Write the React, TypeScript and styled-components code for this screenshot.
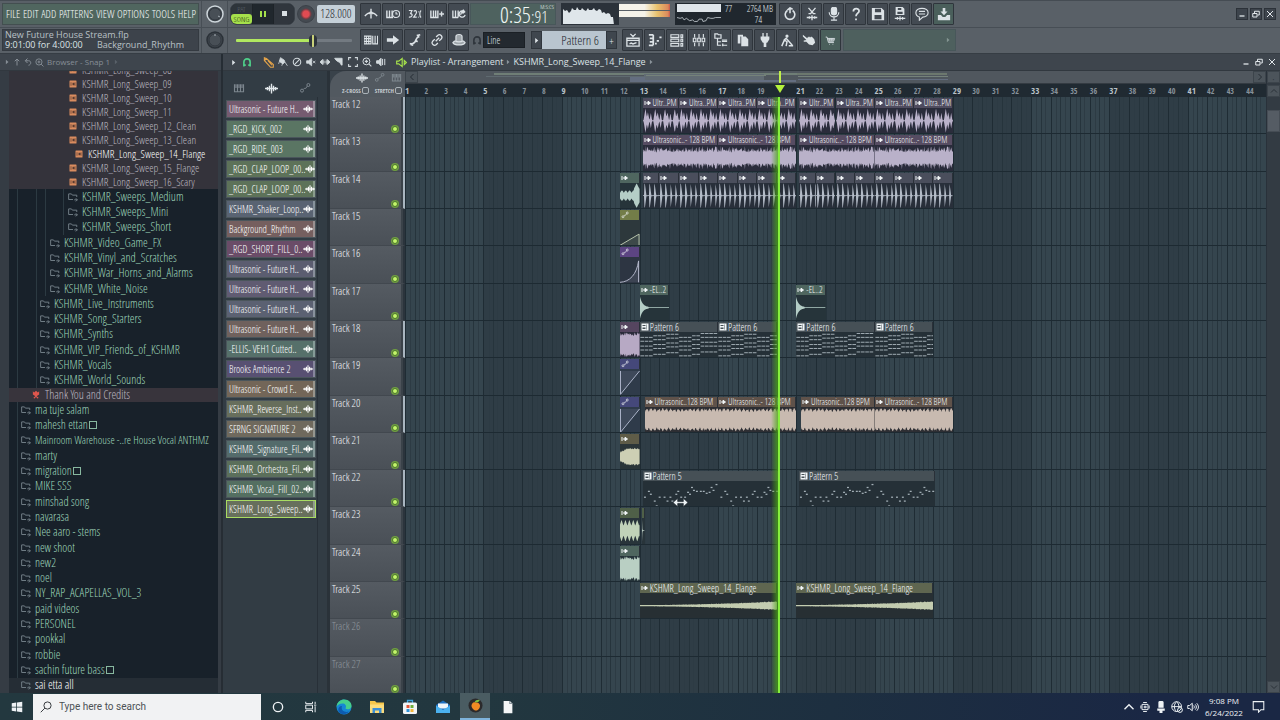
import React from "react";
import styled, { createGlobalStyle, css } from "styled-components";

const narrow = `"Open Sans Condensed Light", "Open Sans Condensed", "Liberation Sans Narrow", sans-serif`;
const strong = `"Open Sans Condensed", "Liberation Sans Narrow", sans-serif`;
const sans = `"Open Sans", "Noto Sans", sans-serif`;

const GlobalStyle = createGlobalStyle`
  *, *::before, *::after { box-sizing: border-box; }
  body { margin: 0; background: #2f3b43; font-family: ${narrow}; font-weight: 300; font-size: 11px; color: #d5dbdf; }
  button, input, select { font: inherit; color: inherit; margin: 0; padding: 0; border: 0; background: none; border-radius: 0; }
  ul { margin: 0; padding: 0; list-style: none; }
  svg { display: block; flex: none; }
`;

/* ---------- icons, all on a 16 x 16 box ---------- */

const WaveGlyph = <path d="M0 8h16M3 6v4M5.500 4.500v7M8 2v12M10.500 4.500v7M13 6v4" strokeWidth="1.700" />;
const PianoGlyph = <path d="M2 3v10h12V3M6 3v10M10 3v10M4 3v5M8 3v5M12 3v5" strokeWidth="1.500" />;
const AutoGlyph = (
  <>
    <circle cx="4" cy="11.500" r="2" />
    <circle cx="12.500" cy="4" r="2" />
    <path d="M5.500 10l1.500-1.500h2L11 5.500" />
  </>
);

const icons: Record<string, React.ReactNode> = {
  wave: WaveGlyph,
  piano: PianoGlyph,
  auto: AutoGlyph,
  metronome: <path d="M1 10.500c2-3 4.500-4 7-4s5 1 7 4M8 2v11M5.500 8L8 5l2.500 3" strokeWidth="1.600" />,
  wait: (
    <>
      <path d="M1 4v8h7M4 4v8M7 4v8" strokeWidth="1.600" />
      <circle cx="11.500" cy="8" r="4" />
      <path d="M11.500 5.500V8h2" />
    </>
  ),
  countdown: <path d="M1 4h3.500L3 7.500c3 .5 2 4.500-2 4M6.500 5c3-2.500 4 1 2.500 3l-2.500 3.500h3.500M12 5v1M12 11v1M15 4c-2 1-2 7 0 8" strokeWidth="1.400" />,
  pianoPlus: <path d="M1 4v8h8V4M4 4v8M6.500 4v8M10.500 8H16M13.200 5.200v5.600" strokeWidth="1.600" />,
  loopRec: <path d="M1 4v8h6M4 4v8M7 4v8M14 5.500a3.500 3.500 0 1 0 1 3.500M10 9a3.500 3.500 0 0 1 4-3.500M12.500 3l2 2.500-2.500 2" strokeWidth="1.500" />,
  typing: <path d="M0 3.500h8v9H0zM0 6.500h8M0 9.500h8M2.700 3.500v9M5.400 3.500v9M10 3v9.500h5.500V3M12.700 3v9" strokeWidth="1.300" />,
  arrow: <path d="M1 6h7V2.500L15 8l-7 5.500V10H1z" fill="currentColor" stroke="none" />,
  slide: <path d="M2 12c4 1 6-1 7-4s2-3 4-4M3 13l3 1M10 3l4-1M8 8l3 2" strokeWidth="1.900" />,
  link: <path d="M6.500 9.500l4-4M7 4.500l2-2c2.500-2 6 1.500 4 4l-2.500 2.500M9 11.500l-2 2c-2.500 2-6-1.500-4-4L5.500 7" strokeWidth="1.500" />,
  stamp: <path d="M4.500 10V4c0-3 7-3 7 0v6M1 11c2 3.500 12 3.500 14 0-1.500-1.800-3-2-3-2-1 1.500-7 1.500-8 0 0 0-1.500.2-3 2z" fill="currentColor" fillOpacity=".6" />,
  playlist: <path d="M5 1l3 3 3-3M1 6h14v9H1zM1 8.500h14M4 12.500l2-1 2 1 4-1.500" strokeWidth="1.500" />,
  pianoRoll: <path d="M1 2h5M1 14h5M6 2v12M2 6h4M2 10h4M8 12h2M10 9h2.500M13 5h2.500" strokeWidth="2" />,
  rack: <path d="M1 2h9v3H1zM1 7h9v3H1zM1 12h9v3H1zM12.500 2h2v3h-2zM12.500 7h2v3h-2zM12.500 12h2v3h-2z" />,
  mixer: <path d="M3 1v4M3 11v4M8 1v5M8 11v4M13 1v4M13 11v4M1.500 6h3v4h-3zM6.500 6h3v4h-3zM11.500 6h3v4h-3z" />,
  tree: <path d="M1 1h3l1 1h3v4H1zM4 6v8h4M4 10h4M9 8h6M9 9.500h6M9 14h6M10 12v3" strokeWidth="1.400" />,
  copy: <path d="M2 2h6v2H5v8H2zM6 4h5l3 3v8H6z" fill="currentColor" stroke="none" />,
  plug: <path d="M5 0h1.500v4h3V0H11v4h2v3l-2.500 4H9.500v5h-3v-5H5.500L3 7V4h2z" fill="currentColor" stroke="none" />,
  remove: <path d="M8 2.500a1 1 0 1 0 1 1zM8 5L5 8l3 2-1 5M5 8l-3 7M7 6l7 8M10 14.500h5" strokeWidth="1.700" />,
  hand: <path d="M1 2l5 4 1-2 1 1 1-1 1 1 1-1 3 3 1 4-3 3-4-1-3-3-3 0 0-1.500 3-.5L1 4z" fill="currentColor" stroke="none" />,
  cart: <path d="M1 3h2l2 8h8M3.500 5H14l-1.500 4H5M4 7h9M6 13.500h1M11 13.500h1M7 5v4M10 5v4" strokeWidth="1.300" />,
  restore: <path d="M5 4a5.500 5.500 0 1 0 6 0M8 7V1M5 3.500L8 1l3 1.500" strokeWidth="1.800" />,
  cut: <path d="M4 1l6 7M12 1L6 8M4 7.500h2M10 7.500h2M2 12h12M5 10.500v3M8 9.500v5.500M11 10.500v3" strokeWidth="1.500" />,
  mic: (
    <>
      <rect x="5" y="0" width="6" height="9" rx="3" fill="currentColor" />
      <path d="M2.500 6c0 7 11 7 11 0M8 11v4M4.500 15h7" />
    </>
  ),
  help: <path d="M5 5c0-4 6.500-4 6.500-.500C11.500 7 8 7 8 10.500M8 13v2" strokeWidth="2" />,
  save: <path fillRule="evenodd" d="M1 1h11l3 3v11H1zM4.500 2v4h7V2zM4 9v5h8V9z" fill="currentColor" stroke="none" />,
  saveNew: (
    <>
      <path fillRule="evenodd" d="M3 0h8l2 2v7H3zM5.500 1v2.500h4V1zM5 5.500V8h6V5.500z" fill="currentColor" stroke="none" />
      <path d="M2 13h12M5 11.500v3M8 10.500v5M11 11.500v3" />
    </>
  ),
  chat: <path d="M8 1.500c4 0 7 2 7 5s-3 5-6 5L5 15v-3.500C2.500 10.500 1 9 1 6.500c0-3 3-5 7-5zM4.500 5h7M4.500 8h7" />,
  download: <path d="M6.500 1h3v4H12L8 9.500 4 5h2.500zM1 9h3.500l2 2.500h3l2-2.500H15v6H1z" fill="currentColor" stroke="none" />,
  magnet: <path d="M3 15V8a5 5 0 0 1 10 0v7M2 13h4M10 13h4" strokeWidth="2.600" />,
  pencil: <path d="M2 1l3 1 10 9v4h-4L2 5zM5 2L2.500 5M7 5l6 7" strokeWidth="1.600" />,
  brush: <path d="M4 1l6 4 1 3-3 3-6-4zM8 9l-2 5M11 8l4 6M2 8l-1 3" fill="currentColor" />,
  ban: (
    <>
      <circle cx="8" cy="8" r="6" strokeWidth="1.700" />
      <path d="M3.500 12.500l9-9" strokeWidth="1.700" />
    </>
  ),
  mute: (
    <>
      <path d="M1 6h3l5-4v12L4 10H1z" fill="currentColor" />
      <path d="M11 6l4 4M15 6l-4 4" />
    </>
  ),
  slip: <path d="M4 4L0 8l4 4zM12 4l4 4-4 4zM6 4v8M10 4v8M4 8h8" fill="currentColor" />,
  slicer: <path d="M1 2h12v11c-2 0-3-2-3-4C7 8 3 6 1 2zM9 4v4" fill="currentColor" />,
  select: <path d="M1 5V1h4M11 1h4v4M15 11v4h-4M5 15H1v-4" strokeWidth="1.700" />,
  zoom: (
    <>
      <circle cx="7" cy="7" r="5.500" strokeWidth="1.600" />
      <path d="M11 11l4 4M7 4.500v5M4.500 7h5" strokeWidth="1.700" />
    </>
  ),
  preview: <path d="M1 6h3l4-4v12L4 10H1zM10.500 3v10M14 3v10" fill="currentColor" strokeWidth="1.600" />,
  speaker: <path d="M1 6h3l5-4v12L4 10H1zM12 5l3 3-3 3z" strokeWidth="1.700" />,
  up: <path d="M8 15V2M3.500 6.500L8 2l4.500 4.500" strokeWidth="2" />,
  back: <path d="M7 1L2.500 5.500 7 10M3 5.500h6c6 0 6 8 0 9" strokeWidth="2" />,
  folder: <path d="M1 3h4.500l1.500 2h7v3M1 3v9h7M10 12.500h5M12.500 10l2.500 2.500L12.500 15" strokeWidth="1.500" />,
  sample: (
    <>
      <rect x="1" y="1" width="14" height="14" rx="1" fill="#d98c5f" stroke="none" />
      <path d="M4 4.500v7M6 8h3M12 4.500v7M8.500 5.500L11 8l-2.500 2.500z" stroke="#4b332d" fill="#4b332d" />
    </>
  ),
  flower: <path d="M3 2l2 2 3-3 3 3 2-2v5l-3 2-1 1 3 2-1 2-3-3-3 3-1-2 3-2-1-1-3-2z" fill="#e0564d" stroke="none" />,
  audioClip: <path d="M2 4v8M4 8h5M8 4.500L13 8l-5 3.500z" fill="currentColor" strokeWidth="2" />,
  patternClip: <path fillRule="evenodd" d="M1 1h14v14H1zM3 4v2h6V4zM3 9v3h6V9zM11 3v10h1V3z" fill="currentColor" stroke="none" />,
  minimise: <path d="M3 12h10" strokeWidth="2.600" />,
  window: <path d="M1.500 7h8.500v7H1.500zM5 6V2.500h9.500V10H11" strokeWidth="2" />,
  close: <path d="M2 2l12 12M14 2L2 14" strokeWidth="2" />,
  right: <path d="M5 2l7 6-7 6z" fill="currentColor" stroke="none" />,
  chevLeft: <path d="M11 2L5 8l6 6" strokeWidth="2" />,
  chevRight: <path d="M5 2l6 6-6 6" strokeWidth="2" />,
  chevUp: <path d="M2 11l6-6 6 6" strokeWidth="1.800" />,
  chevDown: <path d="M2 5l6 6 6-6" strokeWidth="1.800" />,
  search: (
    <>
      <circle cx="10" cy="6" r="4.800" />
      <path d="M6.500 9.500L1 15" />
    </>
  ),
  resize: <path d="M0 8l5-4.500V7h6V3.500L16 8l-5 4.500V9H5v3.500z" fill="#eef3f5" stroke="#1c252c" strokeWidth=".7" />,
  windows: <path d="M1 3l6-1v5.500H1zM8 2l7-1v6.500H8zM1 8.500h6V14l-6-1zM8 8.500h7V15l-7-1z" fill="currentColor" stroke="none" />,
  cortana: <circle cx="8" cy="8" r="6.200" strokeWidth="1.800" />,
  taskView: <path d="M1 1v2.500h9V1M1 15v-2.500h9V15M1 5.500h9v5H1zM13.500 1v3M13.500 7v8M12 5.500h3" strokeWidth="1.300" />,
  edge: (
    <>
      <circle cx="8" cy="8" r="7.500" fill="#1688d4" stroke="none" />
      <path d="M.5 8C1 2.500 5 .500 8 .500c5 0 8 3.500 7.500 7-.5 3-5 3.500-6 2 1.500-3-.5-5-3-5C3.500 4.500 1.500 6 .5 8z" fill="#45cf8d" stroke="none" />
      <path d="M6 7c-1.500 4 2 7 7 5.500-3 4-9 3.500-10.500-.500C1.500 9 4 6.500 6 7z" fill="#0d5bb0" stroke="none" />
    </>
  ),
  explorer: (
    <>
      <path d="M1 2h5l1.500 1.500H15V14H1z" fill="#f5c64b" stroke="none" />
      <path d="M1 5.500h14V14H1z" fill="#fbdc7c" stroke="none" />
      <path d="M3.500 14V9h9v5h-2.500v-2.500H6V14z" fill="#3c8fd6" stroke="none" />
    </>
  ),
  store: (
    <>
      <path d="M5.500 4V1.500h5V4" stroke="#3fa6e0" />
      <rect x="1" y="3.500" width="14" height="11.500" rx="1.500" fill="#f1f4f6" stroke="none" />
      <path d="M4.500 6h3v3h-3z" fill="#e3563a" stroke="none" />
      <path d="M8.500 6h3v3h-3z" fill="#6fae3b" stroke="none" />
      <path d="M4.500 10h3v3h-3z" fill="#2f93d8" stroke="none" />
      <path d="M8.500 10h3v3h-3z" fill="#f2b63a" stroke="none" />
    </>
  ),
  mail: (
    <>
      <path d="M1 6l7-4.500L15 6v8H1z" fill="#1d6fc0" stroke="none" />
      <path d="M3 4.500h10v5H3z" fill="#eef5fa" stroke="none" />
      <path d="M1 6.500l7 4.500 7-4.500V14H1z" fill="#4bb1ef" stroke="none" />
    </>
  ),
  fruit: (
    <>
      <circle cx="8" cy="8" r="7.500" fill="#2b2a2c" stroke="none" />
      <path d="M8 4.500c4 0 5.500 3 4.500 5.500S9 14 7 13 3 9.500 4 7s2-2.500 4-2.500z" fill="#f08a24" stroke="none" />
      <path d="M7 4.500C8 2 10.500 1.500 12.500 2c-.5 2-2.500 3-5.500 2.500z" fill="#7ec142" stroke="none" />
    </>
  ),
  page: (
    <>
      <path d="M3 1h7l3 3v11H3z" fill="#f4f6f7" stroke="none" />
      <path d="M10 1v3h3" stroke="#8d98a0" />
    </>
  ),
  meet: <path d="M4 4.500h8v7H4zM5.500 2h5M5.500 14h5M2.500 6v4M13.500 6v4M7 7h2.500v2H7z" strokeWidth="1.300" />,
  micSolid: <path d="M6 0h4c1 0 1.500 1 1.500 2v7H4.500V2C4.500 1 5 0 6 0zM3 10h10v3h-3v3H6v-3H3z" fill="currentColor" stroke="none" />,
  globe: (
    <>
      <circle cx="7.500" cy="7.500" r="6.500" />
      <path d="M1 7.500h13M7.500 1c-4 3-4 10 0 13M7.500 1c4 3 4 10 0 13" />
      <circle cx="12" cy="12" r="3.200" fill="#1f2f49" />
      <path d="M10 14l4-4" />
    </>
  ),
  volume: <path d="M1 6h2.500L7 3v10L3.500 10H1zM9 6c1 1.500 1 2.500 0 4M11 4.500c2 2.500 2 4.500 0 7M13 3c3 3.500 3 6.500 0 10" />,
  notice: <path d="M1.500 2h13v10H11l-3 3v-3H1.500z" />,
};

const Icon = ({ name, size = 12, color }: { name: string; size?: number; color?: string }) => (
  <svg width={size} height={size} viewBox="0 0 16 16" fill="none" stroke="currentColor" strokeWidth="1.300" color={color} aria-hidden="true">
    {icons[name]}
  </svg>
);

/* ---------- top toolbar ---------- */

const App = styled.div`
  min-height: 100vh;
  display: flex;
  flex-direction: column;
  overflow: hidden;
`;

const TopBar = styled.header`
  display: flex;
  flex: none;
  height: 54px;
  background: #596067;
  border-top: 1px solid #454c53;
  border-bottom: 1px solid #363d44;
`;

const Stack = styled.div<{ $width?: number }>`
  display: flex;
  flex-direction: column;
  ${(p) => (p.$width ? `flex: none; width: ${p.$width}px; border-right: 1px solid #474e55;` : "flex: 1; min-width: 0;")}
`;

const BarRow = styled.div<{ $pad?: number; $gap?: number }>`
  display: flex;
  align-items: center;
  flex: 1;
  padding: 0 ${(p) => p.$pad ?? 0}px;
  gap: ${(p) => p.$gap ?? 0}px;
  & + & { border-top: 1px solid #474e55; }
`;

const Menu = styled.nav`
  flex: 1;
  height: 22px;
  display: flex;
  align-items: center;
  justify-content: space-between;
  padding: 0 2px 0 3px;
  background: #50665f;
  border: 1px solid #434f50;
`;

const MenuButton = styled.button`
  font-size: 11px;
  color: #f4f9f8;
`;

const Info = styled.div`
  flex: 1;
  height: 22px;
  display: grid;
  grid-template-columns: 1fr auto;
  line-height: 10px;
  padding: 0 14px 0 2px;
  font-family: ${sans};
  font-weight: 400;
  font-size: 9px;
  background: #3d434b;
  border: 1px solid #343a41;
  color: #b9c0c6;
  white-space: nowrap;
  b { font-weight: 500; color: #dde3e7; }
  span:first-child { grid-column: 1 / 3; }
`;

const KnobButton = styled.button`
  flex: 1;
  display: grid;
  place-items: center;
`;

const Spacer = styled.div<{ $w: number }>`
  flex: none;
  width: ${(p) => p.$w}px;
`;

const Fill = styled.div`
  flex: 1;
`;

const Transport = styled.div`
  display: flex;
  width: 65px;
  height: 22px;
  background: #2a3037;
  border: 1px solid #3b4249;
  border-radius: 7px;
  overflow: hidden;
`;

const ModeSwitch = styled.button`
  width: 21px;
  display: flex;
  flex-direction: column;
  font-size: 8px;
  line-height: 10px;
  color: #59616a;
  text-align: center;
  background: #2e353b;
  span:last-child { background: #a5e04b; color: #1c2612; border-radius: 3px; }
`;

const TransportButton = styled.button<{ $on?: boolean }>`
  flex: 1;
  display: grid;
  place-items: center;
  background: ${(p) => (p.$on ? "#20272d" : "#30363d")};
  border-left: 1px solid #1d2328;
`;

const RecordButton = styled.button`
  width: 18px;
  height: 18px;
  margin: 0 2px;
  border-radius: 50%;
  background: radial-gradient(circle, #e04b52 0 3px, #6b3d44 5px, #444a51 6px);
  border: 1px solid #3b4148;
`;

const Tempo = styled.input`
  width: 38px;
  height: 18px;
  border-radius: 2px;
  background: #c5d0d8;
  color: #1f282f;
  font-size: 12px;
  text-align: center;
`;

const ToolButton = styled.button<{ $green?: boolean }>`
  flex: none;
  width: 21px;
  height: 22px;
  display: grid;
  place-items: center;
  color: #dce2e6;
  background: ${(p) => (p.$green ? "#4a5f5b" : "#434a52")};
  border: 1px solid #2f353c;
  border-radius: 1px;
`;

const ToolGroup = styled.div`
  display: flex;
  gap: 1px;
`;

const Clock = styled.div`
  position: relative;
  width: 86px;
  height: 22px;
  margin-left: 1px;
  padding-right: 7px;
  display: flex;
  justify-content: flex-end;
  align-items: baseline;
  background: #4e625f;
  border: 1px solid #48575a;
  color: #f0f6f4;
  font-size: 22px;
  line-height: 20px;
  small { font-size: 17px; }
`;

const ClockUnit = styled.span`
  position: absolute;
  top: 0;
  right: 1px;
  font-size: 6px;
  line-height: 6px;
`;

const Scope = styled.div`
  width: 58px;
  height: 22px;
  margin-left: 5px;
  padding: 1px;
  background: #2b323a;
`;

const Meter = styled.div`
  width: 51px;
  height: 22px;
  display: flex;
  flex-direction: column;
  gap: 1px;
  padding-top: 1px;
`;

const MeterBar = styled.div`
  height: 6px;
  background: linear-gradient(90deg, #f5f3ea 0 50%, #e8c26d 75%, #dc8a5c 96%, #c9564a);
`;

const Cpu = styled.div`
  width: 101px;
  height: 22px;
  margin: 0 3px 0 5px;
  padding: 0 2px;
  display: grid;
  grid-template-columns: 44px 1fr;
  grid-template-rows: 11px 11px;
  align-items: center;
  background: #20272e;
  color: #e2e8ec;
  font-size: 9px;
  line-height: 11px;
`;

const Load = styled.div`
  height: 8px;
  background: #dfe5ea;
`;

const CpuText = styled.div<{ $end?: number }>`
  display: flex;
  justify-content: space-between;
  padding: 0 ${(p) => p.$end ?? 1}px 0 4px;
`;

const WindowButton = styled.button<{ $framed?: boolean }>`
  width: 12px;
  height: 12px;
  display: grid;
  place-items: center;
  color: #e1e6ea;
  ${(p) => p.$framed && css`background: #3d444c; border: 1px solid #2c3239;`}
`;

const Push = styled.div<{ $gap: number; $end: number }>`
  margin-left: auto;
  padding-right: ${(p) => p.$end}px;
  display: flex;
  gap: ${(p) => p.$gap}px;
`;

const SongPosition = styled.input`
  appearance: none;
  width: 116px;
  height: 12px;
  &::-webkit-slider-runnable-track {
    height: 3px;
    border-radius: 1px;
    background: linear-gradient(90deg, #b1e860 68%, #737a81 68%);
  }
  &::-webkit-slider-thumb {
    appearance: none;
    width: 8px;
    height: 12px;
    margin-top: -4px;
    border-radius: 4px;
    background: linear-gradient(90deg, #2e343b 3px, #c9d17a 3px 5px, #2e343b 5px);
  }
`;

const SnapSelect = styled.select`
  appearance: none;
  width: 42px;
  height: 16px;
  padding: 0 3px;
  background: #23292f;
  border: 1px solid #1b2025;
  color: #dde3e7;
  font-size: 10px;
`;

const PatternName = styled.button`
  width: 64px;
  height: 18px;
  background: #b9c5cf;
  color: #1e262d;
  font-size: 13px;
  text-align: right;
  padding-right: 7px;
`;

const SmallButton = styled.button`
  width: 11px;
  height: 18px;
  display: grid;
  place-items: center;
  background: #3f464e;
  border: 1px solid #30363d;
  color: #dfe5e9;
`;

const HintPanel = styled.div`
  width: 113px;
  height: 22px;
  margin-left: 2px;
  padding-right: 4px;
  display: flex;
  align-items: center;
  justify-content: flex-end;
  background: #4e605e;
  border: 1px solid #48575a;
  color: #849592;
`;

const Knob = ({ light }: { light?: boolean }) => (
  <svg width="20" height="20" viewBox="0 0 20 20" fill="none" aria-hidden="true">
    <circle cx="10" cy="10" r="8" fill="#3e454c" stroke={light ? "#cdd5da" : "#2b3138"} strokeWidth="1.500" />
    <circle cx="10" cy="10" r="6" fill="#484f56" stroke="#333940" />
    <path d={light ? "M13 12l2 1" : "M10 4v2"} stroke="#aab2b8" />
  </svg>
);

const topTools = ["metronome", "wait", "countdown", "pianoPlus", "loopRec"];
const editTools = ["typing", "arrow", "slide", "link", "stamp"];
const fileTools = ["restore", "cut", "mic", "help", "save", "saveNew", "chat", "download"];
const viewTools = ["playlist", "pianoRoll", "rack", "mixer", "tree", "copy", "plug", "remove", "hand", "cart"];

const Tools = ({ names, green }: { names: string[]; green?: string }) => (
  <ToolGroup>
    {names.map((n) => (
      <ToolButton key={n} aria-label={n} $green={n === green}>
        <Icon name={n} size={n === "cart" ? 11 : 14} />
      </ToolButton>
    ))}
  </ToolGroup>
);

const Toolbar = () => (
  <TopBar>
    <Stack $width={202}>
      <BarRow $pad={2}>
        <Menu>
          {["FILE", "EDIT", "ADD", "PATTERNS", "VIEW", "OPTIONS", "TOOLS", "HELP"].map((m) => (
            <MenuButton key={m}>{m}</MenuButton>
          ))}
        </Menu>
      </BarRow>
      <BarRow $pad={2}>
        <Info>
          <span>New Future House Stream.flp</span>
          <b>9:01:00 for 4:00:00</b>
          <span>Background_Rhythm</span>
        </Info>
      </BarRow>
    </Stack>
    <Stack $width={26}>
      <BarRow><KnobButton aria-label="Main volume"><Knob light /></KnobButton></BarRow>
      <BarRow><KnobButton aria-label="Main pitch"><Knob /></KnobButton></BarRow>
    </Stack>
    <Stack>
      <BarRow>
        <Spacer $w={2} />
        <Transport>
          <ModeSwitch><span>PAT</span><span>SONG</span></ModeSwitch>
          <TransportButton $on aria-label="Pause">
            <svg width="6" height="6" viewBox="0 0 6 6"><path d="M0 0h2v6H0zM4 0h2v6H4z" fill="#a5e04b" /></svg>
          </TransportButton>
          <TransportButton aria-label="Stop">
            <svg width="5" height="5" viewBox="0 0 5 5"><path d="M0 0h5v5H0z" fill="#d9dfe3" /></svg>
          </TransportButton>
        </Transport>
        <RecordButton aria-label="Record" />
        <Tempo aria-label="Tempo" defaultValue="128.000" />
        <Spacer $w={5} />
        <Tools names={topTools} />
        <Clock>0:35<small>:91</small><ClockUnit>M:S:CS</ClockUnit></Clock>
        <Scope>
          <svg width="56" height="20" viewBox="0 0 56 20" aria-hidden="true">
            <path d="M1 20V5l2 2 2-1 2 3 2-2 1-3 2 2 2 0 1-3 2 3 2 0 1-2 2 2 2 1 2-3 1 2 3 0 2-2 1 2 2 1 2-2 2 1 1 3 2-1 2 2 2-1 2 1 1 3 2 0 1 8z" fill="#dfe6ea" />
          </svg>
        </Scope>
        <Meter><MeterBar /><MeterBar /></Meter>
        <Cpu>
          <Load />
          <CpuText><span>77</span><span>2764 MB</span></CpuText>
          <svg width="44" height="9" viewBox="0 0 56 9" fill="none" stroke="#cdd5da" aria-hidden="true">
            <path d="M0 2l4 1 3-1 2 3 3-2 4 3 4-1 2 2 4 0 2-3 4 0 1 3 4-1 2-4 4 1 3 0 3-1 7 0" />
          </svg>
          <CpuText $end={12}><span /><span>74</span></CpuText>
        </Cpu>
        <Tools names={fileTools} green="download" />
        <Push $gap={2} $end={4}>
          {["minimise", "window", "close"].map((n) => (
            <WindowButton key={n} $framed aria-label={n}><Icon name={n} size={8} /></WindowButton>
          ))}
        </Push>
      </BarRow>
      <BarRow>
        <Spacer $w={8} />
        <SongPosition type="range" aria-label="Song position" defaultValue={68} />
        <Spacer $w={8} />
        <Tools names={editTools} />
        <Spacer $w={3} />
        <Icon name="magnet" size={10} color="#2f353c" />
        <Spacer $w={1} />
        <SnapSelect aria-label="Snap"><option>Line</option></SnapSelect>
        <Spacer $w={6} />
        <SmallButton aria-label="Pattern list"><Icon name="right" size={7} /></SmallButton>
        <PatternName>Pattern 6</PatternName>
        <SmallButton aria-label="Add pattern">+</SmallButton>
        <Spacer $w={5} />
        <Tools names={viewTools} green="cart" />
        <HintPanel><Icon name="right" size={6} /></HintPanel>
      </BarRow>
    </Stack>
  </TopBar>
);

/* ---------- browser ---------- */

const Main = styled.main`
  flex: 1;
  display: flex;
  min-height: 0;
`;

const BrowserPane = styled.aside`
  flex: none;
  width: 223px;
  display: flex;
  flex-direction: column;
  border-right: 2px solid #262d34;
`;

const TitleBar = styled.div`
  flex: none;
  display: flex;
  align-items: center;
  height: 17px;
  background: #3e454d;
  border-bottom: 1px solid #31383f;
  font-family: ${sans};
  font-weight: 400;
  font-size: 9px;
  line-height: 12px;
  white-space: nowrap;
`;

const BrowserTitle = styled(TitleBar)`
  padding-left: 4px;
  gap: 3px;
  font-size: 8px;
  color: #868e96;
`;

const BrowserBody = styled.div`
  flex: 1;
  display: flex;
  padding: 0 3px 0 9px;
  background: #353c44;
`;

const TreeList = styled.ul`
  flex: 1;
  min-width: 0;
  display: flex;
  flex-direction: column;
  background: #18212a;
`;

type RowKind = "sample" | "folder" | "note";

const guide = (x: number) => `linear-gradient(#2c3a42, #2c3a42) ${x}px 0 / 1px 100% no-repeat`;

const guides = (indent: number) =>
  [8, 27, 36, 54].filter((x) => x < indent - 3).map(guide).join(", ");

const TreeRow = styled.li<{ $kind: RowKind; $indent: number; $bright?: boolean; $cut?: boolean }>`
  ${(p) => (p.$kind === "folder" ? "flex: 1 1 14px;" : `flex: 0 0 ${p.$cut ? 6 : 14}px;`)}
  display: flex;
  align-items: ${(p) => (p.$cut ? "flex-end" : "center")};
  overflow: hidden;
  background: ${(p) => (p.$kind === "sample" ? "#34333b" : p.$kind === "note" ? "#38343c" : p.$bright ? "#252d35" : guides(p.$indent))};
`;

const TreeButton = styled.button<{ $indent: number; $kind: RowKind; $bright?: boolean; $long?: boolean }>`
  flex: 1;
  display: flex;
  align-items: center;
  gap: 4px;
  padding-left: ${(p) => p.$indent}px;
  line-height: 14px;
  font-size: ${(p) => (p.$kind === "sample" || p.$long ? 11 : 12)}px;
  white-space: nowrap;
  color: ${(p) => (p.$bright ? "#ffffff" : p.$kind === "folder" ? "#9fd6ba" : "#bcb8c0")};
  svg { color: #74818a; margin-right: ${(p) => (p.$kind === "sample" ? 1 : 0)}px; }
`;

const MissingGlyph = styled.span`
  width: 8px;
  height: 8px;
  margin-left: -3px;
  border: 1px solid #88b8a0;
`;

interface Node { text: string; x: number; kind?: RowKind; bright?: boolean; boxed?: boolean }

const nodes: Node[] = [
  { text: "KSHMR_Long_Sweep_08", x: 60, kind: "sample" },
  { text: "KSHMR_Long_Sweep_09", x: 60, kind: "sample" },
  { text: "KSHMR_Long_Sweep_10", x: 60, kind: "sample" },
  { text: "KSHMR_Long_Sweep_11", x: 60, kind: "sample" },
  { text: "KSHMR_Long_Sweep_12_Clean", x: 60, kind: "sample" },
  { text: "KSHMR_Long_Sweep_13_Clean", x: 60, kind: "sample" },
  { text: "KSHMR_Long_Sweep_14_Flange", x: 66, kind: "sample", bright: true },
  { text: "KSHMR_Long_Sweep_15_Flange", x: 60, kind: "sample" },
  { text: "KSHMR_Long_Sweep_16_Scary", x: 60, kind: "sample" },
  { text: "KSHMR_Sweeps_Medium", x: 59 },
  { text: "KSHMR_Sweeps_Mini", x: 59 },
  { text: "KSHMR_Sweeps_Short", x: 59 },
  { text: "KSHMR_Video_Game_FX", x: 41 },
  { text: "KSHMR_Vinyl_and_Scratches", x: 41 },
  { text: "KSHMR_War_Horns_and_Alarms", x: 41 },
  { text: "KSHMR_White_Noise", x: 41 },
  { text: "KSHMR_Live_Instruments", x: 31 },
  { text: "KSHMR_Song_Starters", x: 31 },
  { text: "KSHMR_Synths", x: 31 },
  { text: "KSHMR_VIP_Friends_of_KSHMR", x: 31 },
  { text: "KSHMR_Vocals", x: 31 },
  { text: "KSHMR_World_Sounds", x: 31 },
  { text: "Thank You and Credits", x: 22, kind: "note" },
  { text: "ma tuje salam", x: 12 },
  { text: "mahesh ettan", x: 12, boxed: true },
  { text: "Mainroom Warehouse -..re House Vocal ANTHMZ", x: 12 },
  { text: "marty", x: 12 },
  { text: "migration", x: 12, boxed: true },
  { text: "MIKE SSS", x: 12 },
  { text: "minshad song", x: 12 },
  { text: "navarasa", x: 12 },
  { text: "Nee aaro - stems", x: 12 },
  { text: "new shoot", x: 12 },
  { text: "new2", x: 12 },
  { text: "noel", x: 12 },
  { text: "NY_RAP_ACAPELLAS_VOL_3", x: 12 },
  { text: "paid videos", x: 12 },
  { text: "PERSONEL", x: 12 },
  { text: "pookkal", x: 12 },
  { text: "robbie", x: 12 },
  { text: "sachin future bass", x: 12, boxed: true },
  { text: "sai etta all", x: 12, bright: true },
];

const Browser = () => (
  <BrowserPane>
    <BrowserTitle>
      <Icon name="right" size={6} />
      <Icon name="up" size={8} />
      <Icon name="back" size={8} />
      <Icon name="zoom" size={9} />
      Browser - Snap 1
      <Icon name="right" size={6} color="#59616a" />
    </BrowserTitle>
    <BrowserBody>
      <TreeList>
        {nodes.map((n, i) => {
          const kind = n.kind ?? "folder";
          return (
            <TreeRow key={n.text} $kind={kind} $indent={n.x} $bright={n.bright} $cut={i === 0}>
              <TreeButton $indent={n.x} $kind={kind} $bright={n.bright} $long={n.text.length > 40}>
                <Icon name={kind === "note" ? "flower" : kind} size={kind === "sample" ? 8 : 10} />
                {n.text}
                {n.boxed && <MissingGlyph />}
              </TreeButton>
            </TreeRow>
          );
        })}
      </TreeList>
    </BrowserBody>
  </BrowserPane>
);

/* ---------- clip picker ---------- */

const PlaylistPane = styled.section`
  flex: 1;
  min-width: 0;
  display: flex;
  flex-direction: column;
`;

const PlaylistTitle = styled(TitleBar)`
  padding-left: 7px;
  color: #dbe1e5;
`;

const TitleTools = styled.div<{ $gap: number }>`
  display: flex;
  align-items: center;
  gap: ${(p) => p.$gap}px;
`;

const PlaylistBody = styled.div`
  flex: 1;
  display: flex;
  min-height: 0;
  background: #39424a;
`;

const Picker = styled.div`
  flex: none;
  width: 107px;
  display: flex;
  flex-direction: column;
  background: #323c44;
  border-right: 3px solid #2a3239;
`;

const PickerTabs = styled.div`
  height: 26px;
  display: flex;
  align-items: center;
  justify-content: space-around;
  width: 98px;
  padding-top: 8px;
  color: #7b858d;
`;

const PickerList = styled.ul`
  width: 95px;
  flex: 1;
  padding: 3px 0 0 3px;
  display: flex;
  flex-direction: column;
  gap: 2px;
  border-right: 1px solid #283038;
`;

const PickerItem = styled.button<{ $color: string; $selected?: boolean }>`
  width: 90px;
  height: 18px;
  padding: 0 2px;
  display: flex;
  align-items: center;
  justify-content: space-between;
  background: linear-gradient(90deg, transparent 86px, rgba(220, 235, 235, 0.35) 86px), ${(p) => p.$color};
  border: 1px solid ${(p) => (p.$selected ? "#a8dc62" : "#4a555b")};
  color: #ffffff;
  font-size: 10px;
  white-space: nowrap;
`;

const pickerItems: [string, string][] = [
  ["Ultrasonic - Future H..", "#755b70"],
  ["_RGD_KICK_002", "#5a7563"],
  ["_RGD_RIDE_003", "#5a7563"],
  ["_RGD_CLAP_LOOP_00..", "#5d7259"],
  ["_RGD_CLAP_LOOP_00..", "#5d7259"],
  ["KSHMR_Shaker_Loop..", "#596372"],
  ["Background_Rhythm", "#755f5f"],
  ["_RGD_SHORT_FILL_0..", "#6a4c68"],
  ["Ultrasonic - Future H..", "#5b5d70"],
  ["Ultrasonic - Future H..", "#605b72"],
  ["Ultrasonic - Future H..", "#5b6172"],
  ["Ultrasonic - Future H..", "#6f615d"],
  ["-ELLIS- VEH1 Cutted..", "#56706a"],
  ["Brooks Ambience 2", "#585072"],
  ["Ultrasonic - Crowd F..", "#736658"],
  ["KSHMR_Reverse_Inst..", "#676e5c"],
  ["SFRNG SIGNATURE 2", "#6f695d"],
  ["KSHMR_Signature_Fil..", "#546b6b"],
  ["KSHMR_Orchestra_Fil..", "#5b6f5b"],
  ["KSHMR_Vocal_Fill_02..", "#546f61"],
  ["KSHMR_Long_Sweep..", "#676f5c"],
];

/* ---------- playlist ---------- */

const BARS = 44;

const Arrangement = styled.div`
  flex: 1;
  min-width: 0;
  display: flex;
  flex-direction: column;
`;

const HeadRow = styled.div`
  flex: none;
  display: flex;
  height: 26px;
`;

const Corner = styled.div`
  flex: none;
  width: 75px;
  display: flex;
  flex-direction: column;
  background: #525960;
  border-top-left-radius: 16px;
  color: #7f888f;
`;

const CornerRow = styled.div`
  flex: 1;
  display: flex;
  align-items: center;
  justify-content: flex-end;
  gap: 6px;
  padding-right: 3px;
`;

const Tick = styled.label`
  display: flex;
  align-items: center;
  gap: 1px;
  font-family: ${strong};
  font-weight: 700;
  font-size: 6px;
  color: #c3cacf;
  input {
    appearance: none;
    width: 7px;
    height: 7px;
    border: 1px solid #aab2b8;
    border-radius: 2px;
  }
`;

const Timeline = styled.div`
  flex: 1;
  min-width: 0;
  display: flex;
  flex-direction: column;
`;

const Overview = styled.div`
  height: 13px;
  display: flex;
  background: #50575e;
  border-bottom: 1px solid #343b42;
  svg.map { flex: 1; min-width: 0; }
`;

const ScrollButton = styled.button`
  flex: none;
  width: 13px;
  height: 12px;
  display: grid;
  place-items: center;
  background: #4c545b;
  border: 1px solid #3c444b;
  color: #262d34;
`;

const Ruler = styled.div`
  position: relative;
  height: 13px;
  display: flex;
  background: #202a32;
`;

const RulerBar = styled.span<{ $major: boolean }>`
  flex: 1 1 0;
  min-width: 0;
  line-height: 14px;
  font-family: ${strong};
  font-weight: 700;
  font-size: ${(p) => (p.$major ? 9 : 8)}px;
  color: ${(p) => (p.$major ? "#b9c1c7" : "#87919a")};
`;

const Marker = styled.div`
  position: absolute;
  left: ${(19.14 / BARS) * 100}%;
  top: 1px;
  margin-left: -5px;
  border: 5px solid transparent;
  border-top: 8px solid #b4f03c;
  border-bottom: 0;
`;

const VScroll = styled.div`
  flex: none;
  width: 14px;
  display: flex;
  flex-direction: column;
  background: #333b43;
  border-left: 1px solid #29313a;
`;

const Thumb = styled.div`
  height: 22px;
  margin-top: 13px;
  background: #555c64;
  border: 1px solid #464d55;
`;

const Content = styled.div`
  flex: 1;
  display: flex;
  min-height: 0;
  overflow: hidden;
`;

const Column = styled.div`
  display: flex;
  flex-direction: column;
  margin-bottom: -1px;
`;

const TrackColumn = styled(Column)`
  flex: none;
  width: 75px;
`;

const LaneColumn = styled(Column)`
  position: relative;
  flex: 1;
  min-width: 0;
`;

const TrackHead = styled.div<{ $dim: boolean; $used: boolean }>`
  flex: 1 1 36px;
  display: flex;
  justify-content: space-between;
  padding: 1px 5px 1px 2px;
  background: linear-gradient(#555b62, #4a5057);
  border-bottom: 1px solid #42484f;
  border-right: 2px solid ${(p) => (p.$used ? "#a9b6c0" : "#2b343c")};
  box-shadow: inset -2px 0 #3a4249;
  line-height: 12px;
  color: ${(p) => (p.$dim ? "#8f979d" : "#f2f6f8")};
`;

const Led = styled.button`
  align-self: flex-end;
  width: 6px;
  height: 6px;
  border-radius: 50%;
  background: #c3f56a;
  border: 1px solid #4d7430;
  box-shadow: 0 0 0 1px #6f9f40;
`;

const Lane = styled.div`
  position: relative;
  flex: 1 1 36px;
  border-bottom: 1px solid #1d2a32;
`;

const GridLayer = styled.div`
  position: absolute;
  inset: 0;
  display: flex;
`;

const GridBar = styled.div<{ $dark: boolean }>`
  flex: 1 1 0;
  border-left: 1px solid #1f2c34;
  background:
    linear-gradient(#26343c, #26343c) 50% 0 / 1px 100% no-repeat,
    linear-gradient(#2d3b44, #2d3b44) 25% 0 / 1px 100% no-repeat,
    linear-gradient(#2d3b44, #2d3b44) 75% 0 / 1px 100% no-repeat,
    ${(p) => (p.$dark ? "#2f3d46" : "#35454e")};
`;

const Playhead = styled.div`
  position: absolute;
  top: 0;
  bottom: 0;
  right: ${100 - (19.16 / BARS) * 100}%;
  width: 9px;
  background: linear-gradient(90deg, rgba(70, 160, 20, 0), rgba(76, 168, 20, 0.75));
  border-right: 2px solid #86ee3e;
`;

const Pointer = styled.div`
  position: absolute;
  left: ${(13.7 / BARS) * 100}%;
  bottom: -4px;
`;

const ClipBox = styled.div<{ $from: number; $to: number; $bg: string }>`
  position: absolute;
  top: 1px;
  bottom: 0;
  left: ${(p) => ((p.$from - 1) / BARS) * 100}%;
  width: ${(p) => ((p.$to - p.$from) / BARS) * 100}%;
  display: flex;
  flex-direction: column;
  background: ${(p) => p.$bg};
  overflow: hidden;
`;

const ClipHead = styled.div<{ $bg: string; $roomy: boolean }>`
  flex: none;
  height: 10px;
  display: flex;
  align-items: center;
  gap: 1px;
  padding: 0 1px;
  font-size: ${(p) => (p.$roomy ? 10 : 9)}px;
  line-height: 10px;
  white-space: nowrap;
  color: #f2f6f8;
  background: ${(p) => p.$bg};
  border-right: 1px solid #2a3038;
  span { flex: 1; }
`;

const ClipArt = styled.svg`
  flex: 1;
  min-height: 0;
  width: 100%;
`;

type Kind = "duo" | "dense" | "kick" | "loop" | "sweep" | "hit" | "rise" | "block" | "puff" | "slices" | "ramp" | "curve" | "diag" | "chords" | "melody";

interface Clip { from: number; to: number; kind: Kind; head: string; body: string; ink: string; label?: string }

const noise = (i: number) => {
  const v = Math.sin(i * 12.9898) * 43758.5453;
  return v - Math.floor(v);
};

/* loudness from 0 to 1 at t bars into a clip of the given length */
const loudness = (kind: Kind, t: number, length: number, i: number) => {
  const p2 = (t * 2) % 1;
  const p4 = (t * 4) % 1;
  const p = t / length;
  switch (kind) {
    case "duo": return Math.max(0.04, 1 - Math.abs(p2 - 0.25) * 5, 0.7 - Math.abs(p2 - 0.5) * 4, 0.65 - Math.abs(p2 - 0.8) * 5);
    case "dense": return 0.42 + 0.25 * noise(i) + (noise(i + 99) > 0.5 ? 0.38 * noise(i + 7) : 0);
    case "kick": return p4 < 0.3 ? 0.03 : Math.max(0.04, 1.1 - (p4 - 0.35) * 3);
    case "loop": return 0.6 + 0.2 * Math.abs(Math.sin(t * Math.PI * 5)) + 0.16 * noise(i);
    case "sweep": return 0.05 + 0.25 * p * p + 0.07 * p * noise(i);
    case "hit": return p < 0.3 ? 0.85 * Math.exp(-p * 11) + 0.04 : 0.03;
    case "rise": return p > 0.7 ? 1 - Math.abs(p - 0.85) * 3 : 0.22 + 0.2 * Math.abs(Math.sin(p * 16));
    case "block": return 0.7 + 0.3 * noise(i);
    case "puff": return 0.3 + 0.3 * Math.sin(p * 2.4) + 0.15 * noise(i);
    case "slices": return Math.max(0.3, 0.9 - Math.abs(((t * 5) % 1) - 0.4));
    default: return 0;
  }
};

const wavePath = (kind: Kind, length: number) => {
  const count = Math.max(6, Math.round(length * 40));
  const top: string[] = [];
  const bottom: string[] = [];
  for (let i = 0; i <= count; i++) {
    const a = Math.min(1, loudness(kind, (i / count) * length, length, i)) * 12.5;
    top.push(`${i} ${(13 - a).toFixed(1)}`);
    bottom.unshift(`${i} ${(13 + a).toFixed(1)}`);
  }
  return { count, d: `M${top.join("L")}L${bottom.join("L")}z` };
};

const melody = [
  [1, 16], [5, 10], [7, 13], [11, 20], [13, 25], [16, 16], [21, 16], [24, 20], [27, 16], [29, 20], [33, 13], [35, 10], [38, 16], [42, 16],
  [45, 11], [47, 13], [49, 6], [51, 9], [54, 10], [58, 10], [61, 10], [64, 12], [67, 11], [69, 6], [71, 9], [74, 3],
];

const chordSteps = [0, 0, 0, 2, 2, 2, 4, 4, 4, 0, 0, 0, 2, 2, 5, 5, 5, 5];

const Art = ({ clip }: { clip: Clip }) => {
  const length = clip.to - clip.from;
  const width = Math.max(6, Math.round(length * 20));
  const frame = { viewBox: `0 0 ${width} 26`, preserveAspectRatio: "none", "aria-hidden": true } as const;
  if (clip.kind === "ramp" || clip.kind === "curve" || clip.kind === "diag") {
    const line = { ramp: "M0 26L19.500 14.500V26", curve: "M0 26C10 25.500 17 18 19 4V26", diag: "M.500 2V26L20 2" }[clip.kind];
    return <ClipArt {...frame}><path d={line} fill={clip.ink} fillOpacity=".12" stroke={clip.ink} /></ClipArt>;
  }
  if (clip.kind === "melody") {
    return (
      <ClipArt {...frame}>
        {[0, 78].flatMap((dx) => melody.filter(([x]) => dx + x < width).map(([x, y]) => (
          <rect key={`${dx}-${x}`} x={x + dx} y={y} width="2" height="1.300" fill={clip.ink} />
        )))}
      </ClipArt>
    );
  }
  if (clip.kind === "chords") {
    return (
      <ClipArt {...frame}>
        {chordSteps.flatMap((s, i) => [5, 9, 14, 18, 24].map((y) => (
          <rect key={`${i}-${y}`} x={i * 4.4 + 0.4} y={y - s * 0.8} width="3.700" height="1" fill={clip.ink} />
        )))}
      </ClipArt>
    );
  }
  const { count, d } = wavePath(clip.kind, length);
  return <ClipArt {...frame} viewBox={`0 0 ${count} 26`}><path d={d} fill={clip.ink} /></ClipArt>;
};

const lilac = { head: "#4f4c5f", body: "#2a2c3b", ink: "#b9b1c9" };
const grape = { head: "#55455f", body: "#2b2b3a", ink: "#b7a9c4" };
const slate = { head: "#4a4e5c", body: "#282f3a", ink: "#b4bcc8" };
const mint = { head: "#4f665f", body: "#26343a", ink: "#b4cdc6" };
const sand = { head: "#5f524a", body: "#2d2e33", ink: "#c8bab0" };
const grey = { head: "#465056", body: "#253037", ink: "#a3afb6" };
const olive = { head: "#5f6650", body: "#272f33", ink: "#c3ccb0" };
const indigo = { head: "#45487a", body: "#2f3b4a", ink: "#aeb6cc" };

const split = (points: number[], style: Omit<Clip, "from" | "to">, labels: string[]): Clip[] =>
  points.slice(0, -1).map((from, i) => ({ ...style, from, to: points[i + 1], label: labels[i % labels.length] }));

const short = ["Ultr..PM", "Ultra..PM", "Ultra..PM", "Ultra..PM"];
const long = ["Ultrasonic..- 128 BPM"];

const tracks: Record<number, Clip[]> = {
  12: [
    ...split([13.14, 15, 17, 19, 21], { kind: "duo", ...lilac }, short),
    ...split([21.14, 23, 25, 27, 29], { kind: "duo", ...lilac }, short),
  ],
  13: [
    ...split([13.14, 17, 21], { kind: "dense", ...lilac, head: "#564c62" }, long),
    ...split([21.14, 25, 29], { kind: "dense", ...lilac, head: "#564c62" }, long),
  ],
  14: [
    { from: 12, to: 13, kind: "rise", ...mint },
    ...split([13.14, 14, 15, 16, 17, 18, 19, 20, 21], { kind: "kick", ...slate }, [""]),
    ...split([21.14, 22, 23, 24, 25, 26, 27, 28, 29], { kind: "kick", ...slate }, [""]),
  ],
  15: [{ from: 12, to: 13, kind: "ramp", head: "#737d48", body: "#2d383c", ink: "#b9c5ae" }],
  16: [{ from: 12, to: 13, kind: "curve", head: "#5c4482", body: "#2d3542", ink: "#b5b8cc" }],
  17: [
    { from: 13, to: 14.5, kind: "hit", ...mint, label: "-EL..2" },
    { from: 21, to: 22.5, kind: "hit", ...mint, label: "-EL..2" },
  ],
  18: [
    { from: 12, to: 13, kind: "block", ...grape },
    ...split([13, 17, 20], { kind: "chords", ...grey }, ["Pattern 6"]),
    ...split([21, 25, 28], { kind: "chords", ...grey }, ["Pattern 6"]),
  ],
  19: [{ from: 12, to: 13, kind: "diag", ...indigo }],
  20: [
    { from: 12, to: 13, kind: "diag", ...indigo },
    ...split([13.24, 17, 21], { kind: "loop", ...sand }, ["Ultrasonic..128 BPM", "Ultrasonic..- 128 BPM"]),
    ...split([21.24, 25, 29], { kind: "loop", ...sand }, ["Ultrasonic..128 BPM", "Ultrasonic..- 128 BPM"]),
  ],
  21: [{ from: 12, to: 13, kind: "puff", head: "#5f5c48", body: "#2b3538", ink: "#cdcfb4" }],
  22: [
    { from: 13.14, to: 20.1, kind: "melody", ...grey, label: "Pattern 5" },
    { from: 21.14, to: 28.1, kind: "melody", ...grey, label: "Pattern 5" },
  ],
  23: [
    { from: 12, to: 13, kind: "slices", head: "#4f6048", body: "#28343a", ink: "#c0d2b8" },
    { from: 13.12, to: 13.24, kind: "hit", head: "#4f6048", body: "#28343a", ink: "#c0d2c8" },
  ],
  24: [{ from: 12, to: 13, kind: "block", ...mint, ink: "#b9cfc3" }],
  25: [
    { from: 13, to: 20, kind: "sweep", ...olive, label: "KSHMR_Long_Sweep_14_Flange" },
    { from: 21, to: 28, kind: "sweep", ...olive, label: "KSHMR_Long_Sweep_14_Flange" },
  ],
};

const trackNumbers = Array.from({ length: 16 }, (_, i) => i + 12);
const barNumbers = Array.from({ length: BARS }, (_, i) => i + 1);
const usedTracks = [12, 13, 14, 18, 20, 22];
const roomyKinds: Kind[] = ["chords", "melody", "sweep"];

const clipIcon = (k: Kind) => (k === "chords" || k === "melody" ? "patternClip" : k === "ramp" || k === "curve" || k === "diag" ? "auto" : "audioClip");

const LaneClips = ({ clips }: { clips: Clip[] }) => (
  <>
    {clips.map((c) => (
      <ClipBox key={c.from} $from={c.from} $to={c.to} $bg={c.body}>
        <ClipHead $bg={c.head} $roomy={roomyKinds.includes(c.kind)}>
          {c.to - c.from > 0.5 && <Icon name={clipIcon(c.kind)} size={8} />}
          <span>{c.label}</span>
        </ClipHead>
        <Art clip={c} />
      </ClipBox>
    ))}
  </>
);

const OverviewMap = () => (
  <svg className="map" height="12" viewBox="0 0 835 12" preserveAspectRatio="none" aria-hidden="true">
    <path d="M76 2h290v2H76zM366 2h130v2H366z" fill="#6f7e76" />
    <path d="M68 5h158v1H68z" fill="#5f6a70" />
    <path d="M226 3h120v8H226z" fill="#626c74" />
    <path d="M212 6h15v5h-15zM226 9h152v2H226zM380 8h150v1H380z" fill="#646e80" />
    <path d="M228 4h120v1H228zM380 5h150v1H380z" fill="#75827a" />
    <path d="M379 2h150v2H379z" fill="#6c786e" />
    <path d="M361 0h2v12h-2z" fill="#c1f04a" />
  </svg>
);

const Playlist = () => (
  <Arrangement>
    <HeadRow>
      <Corner>
        <CornerRow>
          <Icon name="wave" size={12} color="#dfe5e8" />
          <Icon name="auto" size={11} />
          <Icon name="piano" size={11} />
        </CornerRow>
        <CornerRow>
          <Tick>Z-CROSS<input type="checkbox" /></Tick>
          <Tick>STRETCH<input type="checkbox" /></Tick>
        </CornerRow>
      </Corner>
      <Timeline>
        <Overview>
          <ScrollButton aria-label="Scroll left"><Icon name="chevLeft" size={8} /></ScrollButton>
          <OverviewMap />
          <ScrollButton aria-label="Scroll right"><Icon name="chevRight" size={8} /></ScrollButton>
        </Overview>
        <Ruler>
          {barNumbers.map((b) => <RulerBar key={b} $major={b % 4 === 1}>{b === 20 ? "" : b}</RulerBar>)}
          <Marker />
        </Ruler>
      </Timeline>
      <VScroll>
        <ScrollButton aria-label="Options">·</ScrollButton>
        <Fill />
        <ScrollButton aria-label="Scroll up"><Icon name="chevUp" size={8} /></ScrollButton>
      </VScroll>
    </HeadRow>
    <Content>
      <TrackColumn>
        {trackNumbers.map((n) => (
          <TrackHead key={n} $dim={n > 25} $used={usedTracks.includes(n)}>
            Track {n}
            <Led aria-label={`Mute track ${n}`} />
          </TrackHead>
        ))}
      </TrackColumn>
      <LaneColumn>
        <GridLayer>
          {barNumbers.map((b) => <GridBar key={b} $dark={Math.floor((b - 1) / 4) % 2 === 1} />)}
        </GridLayer>
        {trackNumbers.map((n) => (
          <Lane key={n}>
            <LaneClips clips={tracks[n] ?? []} />
            {n === 22 && <Pointer><Icon name="resize" size={15} /></Pointer>}
          </Lane>
        ))}
        <Playhead />
      </LaneColumn>
      <VScroll>
        <Thumb />
        <Fill />
        <ScrollButton aria-label="Scroll down"><Icon name="chevDown" size={8} /></ScrollButton>
      </VScroll>
    </Content>
  </Arrangement>
);

/* ---------- taskbar ---------- */

const TaskBar = styled.footer`
  flex: none;
  height: 27px;
  display: flex;
  align-items: center;
  background: linear-gradient(90deg, #23383f 0, #22373f 38%, #1d2f40 65%, #1a2744 90%);
  color: #eef2f5;
  font-family: ${sans};
  font-weight: 400;
`;

const TaskButton = styled.button<{ $active?: boolean }>`
  width: ${(p) => (p.$active ? 30 : 33)}px;
  height: 27px;
  display: grid;
  place-items: center;
  ${(p) => p.$active && "background: #4a5c62; border-bottom: 2px solid #7fb4dc; margin: 0 1px;"}
`;

const SearchBox = styled.label`
  width: 228px;
  height: 26px;
  display: flex;
  align-items: center;
  gap: 7px;
  padding-left: 7px;
  background: #f1f2f3;
  color: #33383c;
  font-family: Roboto, sans-serif;
  input { flex: 1; min-width: 0; font-size: 10px; outline: 0; }
  input::placeholder { color: #4c5155; opacity: 1; }
`;

const DateText = styled.div`
  width: 42px;
  margin-right: 3px;
  font-size: 8px;
  line-height: 12px;
  text-align: center;
`;

const Tray = styled(Push)`
  align-items: center;
`;

const Taskbar = () => (
  <TaskBar>
    <TaskButton aria-label="Start"><Icon name="windows" size={12} /></TaskButton>
    <SearchBox>
      <Icon name="search" size={12} />
      <input type="text" placeholder="Type here to search" aria-label="Search" />
    </SearchBox>
    {["cortana", "taskView", "edge", "explorer", "store", "mail"].map((n) => (
      <TaskButton key={n} aria-label={n}><Icon name={n} size={n === "cortana" || n === "taskView" ? 12 : 16} /></TaskButton>
    ))}
    <TaskButton $active aria-label="FL Studio"><Icon name="fruit" size={15} /></TaskButton>
    <TaskButton aria-label="Document"><Icon name="page" size={14} /></TaskButton>
    <Tray $gap={4} $end={15}>
      {["chevUp", "meet", "micSolid", "globe", "volume"].map((n) => (
        <Icon key={n} name={n} size={12} />
      ))}
      <DateText>9:08 PM<br />6/24/2022</DateText>
      <Icon name="notice" size={13} />
    </Tray>
  </TaskBar>
);

const titleTools: [string, string, number][] = [
  ["pencil", "#e5a44a", 11], ["brush", "#d3dade", 10], ["ban", "#d3dade", 10], ["mute", "#d3dade", 10], ["slip", "#d3dade", 10],
  ["slicer", "#d3dade", 10], ["select", "#d3dade", 10], ["zoom", "#d3dade", 10], ["preview", "#d3dade", 10],
];

export default function Studio() {
  return (
    <App>
      <GlobalStyle />
      <Toolbar />
      <Main>
        <Browser />
        <PlaylistPane>
          <PlaylistTitle>
            <Icon name="right" size={7} />
            <Spacer $w={5} />
            <Icon name="magnet" size={10} color="#4fd08a" />
            <Spacer $w={11} />
            <TitleTools $gap={4}>
              {titleTools.map(([n, c, s]) => <Icon key={n} name={n} size={s} color={c} />)}
            </TitleTools>
            <Spacer $w={10} />
            <Icon name="speaker" size={11} color="#a5e04b" />
            <Spacer $w={4} />
            <TitleTools $gap={2}>
              Playlist - Arrangement
              <Icon name="right" size={6} color="#8b949b" />
              KSHMR_Long_Sweep_14_Flange
              <Icon name="right" size={6} color="#8b949b" />
            </TitleTools>
            <Push $gap={1} $end={2}>
              {["minimise", "window", "close"].map((n) => (
                <WindowButton key={n} aria-label={n}><Icon name={n} size={8} /></WindowButton>
              ))}
            </Push>
          </PlaylistTitle>
          <PlaylistBody>
            <Picker>
              <PickerTabs>
                <Icon name="piano" size={12} />
                <Icon name="wave" size={13} color="#e2e8eb" />
                <Icon name="auto" size={12} />
              </PickerTabs>
              <PickerList>
                {pickerItems.map(([text, color], i) => (
                  <li key={i}>
                    <PickerItem $color={color} $selected={i === 20}>
                      {text}
                      <Icon name="wave" size={10} />
                    </PickerItem>
                  </li>
                ))}
              </PickerList>
            </Picker>
            <Playlist />
          </PlaylistBody>
        </PlaylistPane>
      </Main>
      <Taskbar />
    </App>
  );
}
